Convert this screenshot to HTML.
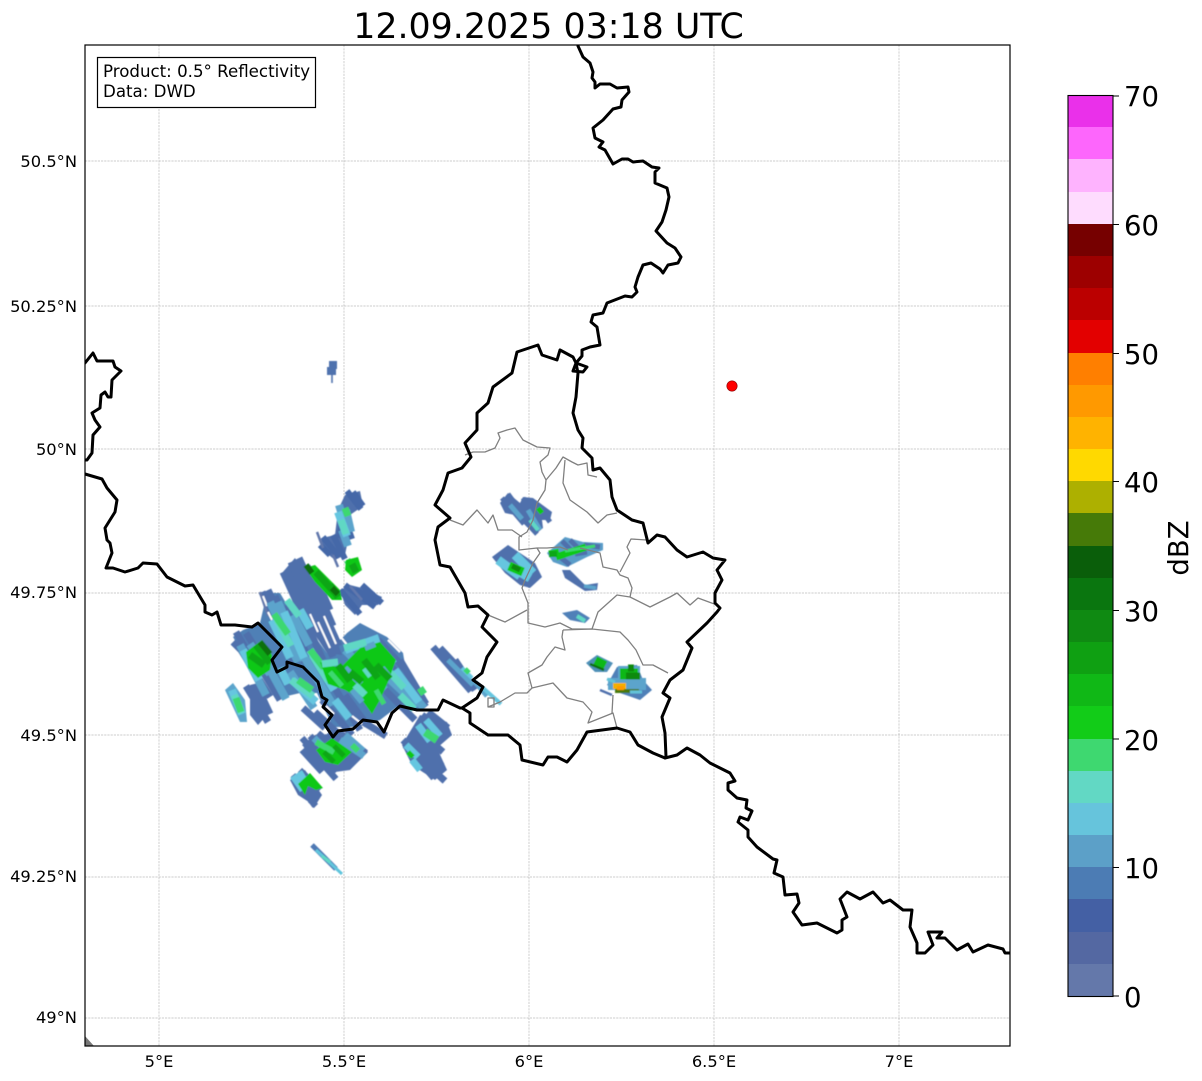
<!DOCTYPE html>
<html><head><meta charset="utf-8"><style>
html,body{margin:0;padding:0;background:#fff}
svg{display:block}
text{font-family:"DejaVu Sans",sans-serif;fill:#000}
.t{font-size:16.3px}
.c{font-size:27.5px}
.r path{fill:none;stroke-linecap:butt}
.r polygon{stroke:none}
.b{stroke:#000;stroke-width:3;fill:none;stroke-linejoin:round;stroke-linecap:round}
.g{stroke:#808080;stroke-width:1.3;fill:none;stroke-linejoin:round}
</style></head><body>
<svg width="1202" height="1081" viewBox="0 0 1202 1081" xmlns="http://www.w3.org/2000/svg">
<defs><clipPath id="ax"><rect x="85" y="45" width="925" height="1001"/></clipPath>
<filter id="sf" x="-5%" y="-5%" width="110%" height="110%"><feGaussianBlur stdDeviation="0.6"/></filter></defs>
<rect width="1202" height="1081" fill="#fff"/>
<text x="548.500" y="38" text-anchor="middle" style="font-size:34.8px">12.09.2025 03:18 UTC</text>
<g clip-path="url(#ax)">
<path d="M159 45V1046M344 45V1046M529 45V1046M714 45V1046M899 45V1046M85 161H1010M85 306H1010M85 449H1010M85 593H1010M85 735H1010M85 877H1010M85 1018H1010" stroke="#bcbcbc" stroke-width="0.7" stroke-dasharray="2.2 1" fill="none"/>
<path d="M85 1036L94 1046L85 1046Z" fill="#777"/>
<g class="r" filter="url(#sf)">
<!-- isolated -->
<path d="M327 371H336M329 365H337" stroke="#4f72ae" stroke-width="8"/>
<path d="M332 375V383" stroke="#4f72ae" stroke-width="1.6"/>
<!-- base blobs -->
<polygon fill="#5080b6" points="233,637 243,630 260,623 267,593 280,593 290,610 300,613 310,630 327,653 347,633 360,623 387,637 403,653 407,677 427,703 420,710 397,707 380,720 357,727 333,727 317,693 300,693 283,697 267,680 250,667"/>
<polygon fill="#4f70ac" points="282,573 295,558 322,600 342,655 327,653 305,620"/>
<polygon fill="#4f70ac" points="345,495 360,491 363,506 350,515 350,530 345,555 335,560 320,548 322,538 335,535 338,510"/>
<polygon fill="#4f70ac" points="345,605 340,590 350,585 362,588 382,597 378,605 362,605 355,615"/>
<polygon fill="#4f70ac" points="302,745 315,735 345,733 368,752 350,770 335,772 318,762"/>
<polygon fill="#4f70ac" points="402,745 420,715 447,722 452,735 437,748 447,770 435,780 412,765"/>
<polygon fill="#4f70ac" points="250,685 258,683 267,715 258,725 250,715"/>
<polygon fill="#5ca4cc" points="225,690 233,683 245,700 247,722 240,722"/>
<polygon fill="#4f70ac" points="290,780 305,770 322,795 315,806 298,795"/>
<polygon fill="#4f70ac" points="500,503 508,493 520,503 523,497 533,498 552,512 550,520 542,520 543,528 537,533 527,527 515,515 505,513"/>
<polygon fill="#4f70ac" points="492,557 508,545 520,553 535,563 542,577 530,588 520,585 505,573"/>
<polygon fill="#5a9cc8" points="547,553 565,537 583,542 603,543 603,550 587,557 567,567 553,562"/>
<polygon fill="#4f70ac" points="562,570 570,570 585,585 598,583 597,590 585,591 565,578"/>
<polygon fill="#4f80b8" points="562,613 577,610 590,618 585,623 570,620"/>
<polygon fill="#4f90b8" points="586,663 597,655 613,663 607,672 595,672"/>
<polygon fill="#4f80b8" points="607,685 617,667 637,665 643,680 652,690 640,700 620,693"/>
<!-- SW blue streaks -->
<path stroke="#4f70ac" stroke-width="7" d="M283 572l40 88M291 562l42 95M299 558l40 88M307 566l26 60M316 578l14 32M262 592l32 70M268 590l34 70M275 596l30 66M284 606l28 60M236 632l18 30M246 633l22 35M233 642l14 14M238 645l32 52M250 650l30 50M268 672l14 26M378 640l28 30M390 665l36 42M375 680l40 40M400 660l26 44M330 680l30 50M345 695l22 30M322 700l30 35M303 708l22 20M315 712l30 28M360 720l26 16M246 686l22 36M256 684l14 30"/>
<path stroke="#4468a8" stroke-width="6" d="M347 491l14 18M353 492l10 14M340 505l12 34M345 510l-6 28M323 537l16 20M333 535l12 24M320 545l10 10M345 585l30 22M355 590l26 12M362 585l20 18M340 590l20 24"/>
<path stroke="#6278ac" stroke-width="2.5" d="M317 532l6 16M333 555l5 12M318 570l14 26M260 592l8 24M350 586l12 14"/>
<!-- white gaps between streaks -->
<path stroke="#fff" stroke-width="2" d="M324 616l12 28M318 622l12 26M310 614l8 18M340 636l8 10M263 596l4 10M268 612l4 8M388 640l12 12M396 684l14 16M352 716l10 8M326 706l8 8M236 662l10 8"/>
<!-- SW lighter -->
<path stroke="#5ca4cc" stroke-width="8" d="M270 602l28 60M278 602l26 58M240 645l26 50M250 644l20 30M262 655l24 44M290 672l24 36M303 655l30 50M345 650l40 40M380 670l38 36M400 680l24 28M339 505l8 26M342 530l6 16M293 615l16 30M346 510l5 22"/>
<path stroke="#66c6e0" stroke-width="8" d="M272 620l18 38M284 612l20 46M243 650l16 30M280 668l8 16M292 680l24 22M310 650l24 40M370 640l24 24M395 670l24 32M338 512l9 24M232 690l10 24M300 610l10 18M345 650l34 -12M335 700l14 18"/>
<path stroke="#60d8c4" stroke-width="7" d="M277 620l14 26M291 680l22 16M312 655l16 26M386 668l18 20M341 520l5 14M234 695l8 18M400 695l14 14M287 600l12 16"/>
<path stroke="#3ed870" stroke-width="7" d="M274 614l14 20M298 680l14 10M310 650l14 18M236 698l5 14M347 560l8 12M420 688l4 6M345 508l3 8"/>
<!-- SW green core -->
<polygon fill="#10c818" points="320,662 340,668 360,648 380,642 396,660 388,682 380,700 372,714 362,700 345,690 328,684"/>
<polygon fill="#10c818" points="246,652 262,640 272,655 270,670 258,678 248,668"/>
<polygon fill="#10c818" points="346,560 358,557 362,570 352,577 345,570"/>
<polygon fill="#10c818" points="305,568 315,565 340,590 342,600 332,600 315,582"/>
<path stroke="#5ca4cc" stroke-width="6" d="M345 668l16 16M365 648l10 -4M382 668l8 10M352 690l10 12"/>
<path stroke="#60d8c4" stroke-width="7" d="M322 664l16 -2M344 648l22 -6M355 685l10 10M365 668l6 8"/>
<path stroke="#3ed870" stroke-width="5" d="M330 672l12 14M376 690l8 14"/>
<path stroke="#0ea612" stroke-width="7" d="M256 645l14 18M250 655l14 10M338 665l12 16M364 660l14 18M376 665l14 14M316 572l18 20M330 585l8 12M352 564l4 8M350 672l12 10"/>
<path stroke="#0a7010" stroke-width="6" d="M260 642l10 12M306 565l6 8M332 588l6 6"/>
<!-- S cluster -->
<path stroke="#4f70ac" stroke-width="6.5" d="M302 738l32 36M310 736l30 32M318 733l34 30M328 733l30 28M302 750l20 22M332 734l28 24M340 733l26 20M306 745l30 34"/>
<path stroke="#5ca4cc" stroke-width="7" d="M314 738l18 18M340 740l24 16M345 735l18 16"/>
<polygon fill="#10c818" points="316,750 332,738 352,752 338,765 325,762"/>
<path stroke="#3ed870" stroke-width="6" d="M316 742l18 10M352 745l6 6"/>
<path stroke="#0ea612" stroke-width="5" d="M324 752l10 10M334 746l10 10"/>
<!-- SW small -->
<path stroke="#4f70ac" stroke-width="6" d="M293 775l20 24M300 770l20 20M303 790l12 16M310 800l6 6"/>
<path stroke="#66c6e0" stroke-width="7" d="M293 776l10 14M299 772l5 8"/>
<polygon fill="#10c818" points="298,784 310,773 323,788 316,790 308,786 305,795"/>
<path stroke="#4f78b4" stroke-width="5" d="M312 845l24 24"/>
<path stroke="#60c4dc" stroke-width="3" d="M316 850l26 24"/>
<path stroke="#60d8c4" stroke-width="3" d="M322 856l8 6"/>
<!-- mid right -->
<path stroke="#4f70ac" stroke-width="7" d="M405 745l40 36M410 738l32 28M415 728l28 24M422 715l26 20M403 740l10 10M410 750l24 28M428 712l20 16"/>
<path stroke="#66c6e0" stroke-width="7" d="M406 745l12 12M418 725l12 16M426 720l14 16M412 760l8 10"/>
<path stroke="#3ed870" stroke-width="8" d="M425 732l12 8"/>
<path stroke="#10c818" stroke-width="5" d="M408 752l5 5"/>
<!-- long thin -->
<path stroke="#4f70ac" stroke-width="7" d="M433 647l38 44M440 648l30 32M455 660l20 30"/>
<path stroke="#5ca4cc" stroke-width="5" d="M448 660l25 25M475 682l12 14"/>
<path stroke="#66c6e0" stroke-width="4" d="M483 688l18 16M462 668l10 10"/>
<path stroke="#3ed870" stroke-width="5" d="M465 669l4 4"/>
<!-- Lux 1 -->
<path stroke="#4f70ac" stroke-width="5" d="M502 498l22 26M508 494l22 30M523 498l12 20M515 510l22 24M533 505l12 12M540 508l10 14"/>
<path stroke="#5ca4cc" stroke-width="5" d="M510 505l12 14M528 510l12 20"/>
<path stroke="#60d8c4" stroke-width="4" d="M530 520l8 10"/>
<path stroke="#10c818" stroke-width="5" d="M538 508l4 5"/>
<!-- Lux 2 -->
<path stroke="#66c6e0" stroke-width="9" d="M498 560l22 16M515 555l18 18M520 572l10 6"/>
<path stroke="#10c818" stroke-width="9" d="M509 566l14 6"/>
<path stroke="#0a8a10" stroke-width="5" d="M512 566l8 4"/>
<!-- Lux 3 -->
<path stroke="#4f70ac" stroke-width="5" d="M562 541l10 10M570 540l10 10M560 557l10 8M584 545l16 2M575 554l12 -2"/>
<path stroke="#10c818" stroke-width="7" d="M549 554l10 -2M556 557l30 -10"/>
<path stroke="#0ea612" stroke-width="6" d="M549 554l8 0"/>
<path stroke="#3ed870" stroke-width="3" d="M565 551l30 -5"/>
<path stroke="#5ca4cc" stroke-width="3.5" d="M584 586l12 2"/>
<!-- Lux 4 -->
<path stroke="#60d8c4" stroke-width="4" d="M577 616l8 5"/>
<!-- Lux SE -->
<path stroke="#10b818" stroke-width="10" d="M595 661l10 5"/>
<path stroke="#0a7010" stroke-width="2.5" d="M590 664l14 6"/>
<path stroke="#5ca4cc" stroke-width="12" d="M618 672h22M608 684h38"/>
<path stroke="#10b818" stroke-width="11" d="M620 674h18"/>
<path stroke="#0a8a10" stroke-width="7" d="M626 676h14M628 668h6"/>
<path stroke="#4a7a08" stroke-width="4" d="M615 691h24"/>
<path stroke="#f3b000" stroke-width="6" d="M613 686h13"/>
<path stroke="#ff9900" stroke-width="4" d="M617 688h7"/>
<path stroke="#62c2d8" stroke-width="3" d="M607 679l8 3M630 692h12"/>
<path stroke="#4f70ac" stroke-width="2.500" d="M600 690l12 5"/>
</g>
<!-- Lux internal lines -->
<path class="g" d="M465 455L473 452L485 452L495 448L500 438L498 433L507 430L515 428L523 440L537 447L550 448L548 455L540 462L542 472L546 480L545 490L537 503L533 520L527 532L519 537L519 550L537 548L547 548L560 547L568 550"/>
<path class="g" d="M546 480L556 468L563 457L572 462L578 465L587 463L588 475L597 477"/>
<path class="g" d="M565 460L563 483L570 500L587 512L598 523L607 515L617 513"/>
<path class="g" d="M450 520L463 525L477 510L488 523L493 515L498 530L512 530L522 537"/>
<path class="g" d="M580 548L600 553L603 567L617 570L620 575L628 578L632 588L630 597"/>
<path class="g" d="M620 572L630 553L627 547L631 539L647 540"/>
<path class="g" d="M537 548L540 553L533 563L525 580L522 588L528 603L528 623L545 627L560 623L572 629L592 629L598 612L617 595L630 597L650 607L670 597L677 593L690 605L698 598L717 605"/>
<path class="g" d="M488 615L505 622L527 610"/>
<path class="g" d="M563 630L562 637L565 650L555 647L547 657L542 665L528 673L532 688L527 693L515 693L500 702L488 707V707H494V698H488V707"/>
<path class="g" d="M563 630L592 629L620 632L628 640L636 650L643 665L653 665L668 673"/>
<path class="g" d="M532 688L553 683L567 698L583 702L592 712L588 723L613 713L617 728"/>
<path class="g" d="M613 695L612 713"/>
<!-- black borders -->
<path class="b" d="M578 46L583 57L590 63L593 72L592 78L595 82L595 88L600 84L610 84L617 88L628 87L629 92L622 100L621 107L613 109L603 120L593 128L595 138L603 142L599 147L605 150L613 164L622 159L628 159L633 162L643 161L652 167L659 168L655 172L655 183L667 188L669 197L666 210L662 222L656 231L667 243L675 248L681 257L678 263L668 265L663 273L660 269L651 263L643 265L638 277L635 287L637 292L632 297L625 296L607 303L603 313L593 315L591 322L597 327L598 333L600 345L590 347L582 350L582 356L576 363L578 373L576 397L573 413L578 430L583 438L582 448L592 458L593 470L600 468L610 480L612 497L617 510L632 520L643 523L648 543L657 535L665 537L677 550L687 557L703 552L713 558L725 560L717 570L722 580L715 593L715 603L720 608L717 612L707 623L687 642L692 648L683 670L670 680L663 693L670 698L662 717L665 733L666 757"/>
<path class="b" d="M576 363L587 367L583 372L573 371L576 363L573 357L560 350L557 360L542 355L538 345L517 352L512 373L493 387L488 403L477 413L477 430L465 443L471 457L462 468L448 473L443 490L435 505L450 518L438 527L435 540L440 565L450 567L465 593L468 607L478 606L488 615L482 627L497 642L487 657L482 673L473 680L483 687L477 698L462 708L470 713L470 723L488 735L508 735L520 745L522 760L543 765L548 757L557 757L567 762L577 750L587 732L617 728L630 732L638 745L653 753L665 758"/>
<path class="b" d="M665 758L677 755L687 748L700 755L710 763L720 768L730 773L735 781L728 783L728 790L737 798L747 800L746 808L752 811L748 820L740 817L738 822L748 830L748 837L757 847L773 859L777 860L774 873L783 877L785 895L797 894L799 903L793 912L802 925L817 923L837 933L842 930L842 920L847 917L840 899L847 892L860 899L873 892L883 903L890 900L903 910L912 910L910 927L917 943L917 953L925 953L933 945L928 932L942 932L937 938L945 938L957 950L968 944L973 952L988 945L1003 949L1005 953L1010 953"/>
<path class="b" d="M85 363L93 353L97 361L113 361L115 367L121 371L112 380L111 397L108 397L105 392L101 395L100 408L92 413L95 420L100 427L93 435L92 453L87 460L85 460"/>
<path class="b" d="M85 474L102 479L107 488L117 500L115 512L105 528L107 540L110 543L112 553L106 568L113 568L125 572L138 568L143 563L157 564L167 577L185 586L193 585L205 605L205 612L212 615L217 612L221 625L235 625L252 627L258 623L282 647L272 660L277 672L287 667L287 662L303 667L318 682L322 697L327 700L323 707L332 715L325 725L333 737L338 731L353 729L363 720L377 722L384 732L392 713L400 706L417 710L438 710L443 700L460 708L462 708"/>
<circle cx="732" cy="386" r="5.2" fill="#f00" stroke="#800" stroke-width="0.6"/>
</g>
<rect x="85" y="45" width="925" height="1001" fill="none" stroke="#000" stroke-width="1.2"/>
<rect x="97.5" y="57.5" width="218" height="50" fill="#fff" stroke="#000" stroke-width="1.2"/>
<text x="103" y="77" style="font-size:16.65px">Product: 0.5° Reflectivity</text>
<text x="103" y="97" style="font-size:16.65px">Data: DWD</text>
<g class="t" text-anchor="end">
<text x="77" y="167">50.5°N</text>
<text x="77" y="312">50.25°N</text>
<text x="77" y="455">50°N</text>
<text x="77" y="598">49.75°N</text>
<text x="77" y="741">49.5°N</text>
<text x="77" y="882">49.25°N</text>
<text x="77" y="1023">49°N</text>
</g>
<g class="t" text-anchor="middle">
<text x="159" y="1067">5°E</text>
<text x="344" y="1067">5.5°E</text>
<text x="529" y="1067">6°E</text>
<text x="714" y="1067">6.5°E</text>
<text x="899" y="1067">7°E</text>
</g>
<!-- colorbar -->
<g shape-rendering="crispEdges">
<rect x="1068" y="95" width="45" height="33" fill="#ea30ea"/>
<rect x="1068" y="127" width="45" height="33" fill="#fd66fc"/>
<rect x="1068" y="159" width="45" height="33" fill="#feb3fe"/>
<rect x="1068" y="192" width="45" height="33" fill="#fedcfe"/>
<rect x="1068" y="224" width="45" height="33" fill="#760000"/>
<rect x="1068" y="256" width="45" height="33" fill="#9d0000"/>
<rect x="1068" y="288" width="45" height="33" fill="#bb0000"/>
<rect x="1068" y="320" width="45" height="33" fill="#e30000"/>
<rect x="1068" y="353" width="45" height="33" fill="#ff7f00"/>
<rect x="1068" y="385" width="45" height="33" fill="#ff9900"/>
<rect x="1068" y="417" width="45" height="33" fill="#ffb300"/>
<rect x="1068" y="449" width="45" height="33" fill="#ffd900"/>
<rect x="1068" y="481" width="45" height="33" fill="#adb000"/>
<rect x="1068" y="513" width="45" height="33" fill="#467a08"/>
<rect x="1068" y="546" width="45" height="33" fill="#0a5e0a"/>
<rect x="1068" y="578" width="45" height="33" fill="#0a760f"/>
<rect x="1068" y="610" width="45" height="33" fill="#0f8a12"/>
<rect x="1068" y="642" width="45" height="33" fill="#0fa012"/>
<rect x="1068" y="674" width="45" height="33" fill="#10b816"/>
<rect x="1068" y="706" width="45" height="33" fill="#12cc18"/>
<rect x="1068" y="739" width="45" height="33" fill="#3ed870"/>
<rect x="1068" y="771" width="45" height="33" fill="#62d8c4"/>
<rect x="1068" y="803" width="45" height="33" fill="#66c4dc"/>
<rect x="1068" y="835" width="45" height="33" fill="#5ca0c8"/>
<rect x="1068" y="867" width="45" height="33" fill="#4c7cb4"/>
<rect x="1068" y="899" width="45" height="33" fill="#4460a4"/>
<rect x="1068" y="932" width="45" height="33" fill="#5468a2"/>
<rect x="1068" y="964" width="45" height="32" fill="#6478aa"/>
</g>
<rect x="1068" y="95.5" width="45" height="901" fill="none" stroke="#000" stroke-width="1.1"/>
<path d="M1113 96h6M1113 224.500h6M1113 353.500h6M1113 481.500h6M1113 610.500h6M1113 739h6M1113 867.500h6M1113 996h6" stroke="#000" stroke-width="1.1"/>
<g class="c">
<text x="1124" y="106">70</text>
<text x="1124" y="235">60</text>
<text x="1124" y="364">50</text>
<text x="1124" y="492">40</text>
<text x="1124" y="621">30</text>
<text x="1124" y="750">20</text>
<text x="1124" y="878">10</text>
<text x="1124" y="1007">0</text>
</g>
<text transform="translate(1188 548) rotate(-90)" text-anchor="middle" style="font-size:27.5px">dBZ</text>
</svg>
</body></html>
